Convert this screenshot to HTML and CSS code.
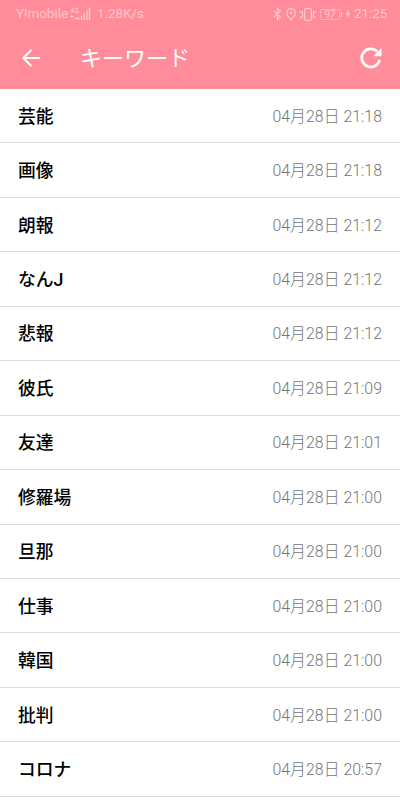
FILE: index.html
```
<!DOCTYPE html>
<html lang="ja">
<head>
<meta charset="UTF-8">
<meta name="viewport" content="width=device-width, initial-scale=1.0">
<title>キーワード</title>
<link rel="stylesheet" href="styles.css">
</head>
<body>

<header class="header">
<!-- Status bar -->
<div class="status-bar">
<span class="carrier">Y!mobile</span>
<svg class="signal" width="21" height="14" viewBox="0 0 21 14">
<g fill="none" stroke="currentColor" stroke-width="0.9">
<path d="M3 6V1L0.6 4.2H4M8.2 1.6H5.6V5.5H8.2V3.8H7"/>
<path d="M1 9.5H4M2.2 8L1 9.5L2.2 11M4.5 11.5H7.5M6.3 10L7.5 11.5L6.3 13"/>
</g>
<path fill="currentColor" d="M8 10.5h1.4V13H8zM10.8 8.5h1.4V13h-1.4zM13.5 6h1.4v7h-1.4zM16.2 3.5h1.4V13h-1.4zM18.8 1h1.4v12h-1.4z"/>
</svg>
<span class="speed">1.28K/s</span>
<div class="status-icons">
<svg width="9" height="14" viewBox="0 0 9 14">
<path d="M1 4L7.5 10L4.5 12.8V1.2L7.5 4L1 10" fill="none" stroke="currentColor" stroke-width="1.2"/>
</svg>
<svg width="10" height="13" viewBox="0 0 10 13">
<path d="M5 12C3 9.5 0.7 7.3 0.7 4.9a4.3 4.3 0 0 1 8.6 0C9.3 7.3 7 9.5 5 12z" fill="none" stroke="currentColor" stroke-width="1.2"/>
<circle cx="5" cy="4.9" r="1.3" fill="currentColor"/>
</svg>
<svg width="16" height="13" viewBox="0 0 16 13">
<rect x="4.6" y="0.6" width="6.8" height="11.8" rx="1.2" fill="none" stroke="currentColor" stroke-width="1.2"/>
<path d="M2.5 2.5v8M13.5 2.5v8M0.8 2.7v2.3M0.8 7.8v2.3M15.2 2.7v2.3M15.2 7.8v2.3" stroke="currentColor" stroke-width="1.2"/>
</svg>
<span class="battery">97</span>
<svg class="bolt" width="6" height="10" viewBox="0 0 6 10">
<path d="M3.7 0L0.5 5.6H2.5L1.9 10L5.4 4.2H3.3z" fill="currentColor"/>
</svg>
</div>
<span class="clock">21:25</span>
</div>

<!-- Title bar -->
<div class="title-bar">
<svg class="back" width="18" height="18" viewBox="0 0 18 18">
<path d="M18 9H1.5M9.3 1L1.4 9L9.3 17" fill="none" stroke="currentColor" stroke-width="2.1"/>
</svg>
<h1 class="title">キーワード</h1>
<svg class="reload" width="22" height="22" viewBox="0 0 22 22">
<path d="M19.6 12.8A9 9 0 1 1 17.2 4.6" fill="none" stroke="currentColor" stroke-width="2.8"/>
<path d="M21.5 1V9.3H13.2z" fill="currentColor"/>
</svg>
</div>
</header>

<!-- Keyword list -->
<ul class="list">
<li class="row"><span class="keyword">芸能</span><span class="date">04月28日 21:18</span></li>
<li class="row"><span class="keyword">画像</span><span class="date">04月28日 21:18</span></li>
<li class="row"><span class="keyword">朗報</span><span class="date">04月28日 21:12</span></li>
<li class="row"><span class="keyword">なんJ</span><span class="date">04月28日 21:12</span></li>
<li class="row"><span class="keyword">悲報</span><span class="date">04月28日 21:12</span></li>
<li class="row"><span class="keyword">彼氏</span><span class="date">04月28日 21:09</span></li>
<li class="row"><span class="keyword">友達</span><span class="date">04月28日 21:01</span></li>
<li class="row"><span class="keyword">修羅場</span><span class="date">04月28日 21:00</span></li>
<li class="row"><span class="keyword">旦那</span><span class="date">04月28日 21:00</span></li>
<li class="row"><span class="keyword">仕事</span><span class="date">04月28日 21:00</span></li>
<li class="row"><span class="keyword">韓国</span><span class="date">04月28日 21:00</span></li>
<li class="row"><span class="keyword">批判</span><span class="date">04月28日 21:00</span></li>
<li class="row"><span class="keyword">コロナ</span><span class="date">04月28日 20:57</span></li>
</ul>

</body>
</html>
```
FILE: styles.css
```
* {
box-sizing: border-box;
}

body {
margin: 0;
height: 800px;
overflow: hidden;
background-color: #fff;
font-family: Roboto, "Noto Sans CJK JP", sans-serif;
}

svg {
display: block;
flex: none;
}

.header {
height: 89px;
background-color: #ff8c98;
color: #fff;
}

.status-bar {
display: flex;
align-items: center;
height: 28px;
padding: 0 13px 0 16px;
font-size: 13.4px;
line-height: 28px;
color: #ffc8cd;
}

.carrier {
width: 54px;
white-space: nowrap;
}

.signal {
margin-top: -1px;
}

.speed {
margin-left: 6px;
}

.status-icons {
display: flex;
align-items: center;
gap: 4px;
margin-left: auto;
}

.battery {
position: relative;
width: 20px;
height: 11px;
margin-right: 2px;
border: 1px solid #ffb0b8;
font-size: 10px;
line-height: 10px;
text-align: center;
}

/* battery tip */
.battery::after {
content: "";
position: absolute;
top: 2px;
right: -3px;
width: 1px;
height: 5px;
background-color: currentColor;
}

.bolt {
margin-left: -1px;
}

.clock {
width: 33px;
margin-left: 3px;
}

.title-bar {
display: flex;
align-items: center;
height: 60px;
padding: 0 18px 0 22px;
}

.title {
flex: 1;
margin: 0 0 0 40px;
padding-top: 1px;
font-size: 22px;
font-weight: 400;
line-height: 30px;
}

.list {
margin: 0;
padding: 0;
list-style: none;
}

.row {
display: flex;
justify-content: space-between;
align-items: center;
height: 54.45px;
padding: 0 18px 2px;
border-bottom: 1px solid #dcdcdc;
}

.keyword {
font-size: 17.8px;
font-weight: 500;
color: #000;
}

.date {
padding-top: 1px;
font-size: 15.9px;
font-weight: 300;
color: #757575;
}
```
